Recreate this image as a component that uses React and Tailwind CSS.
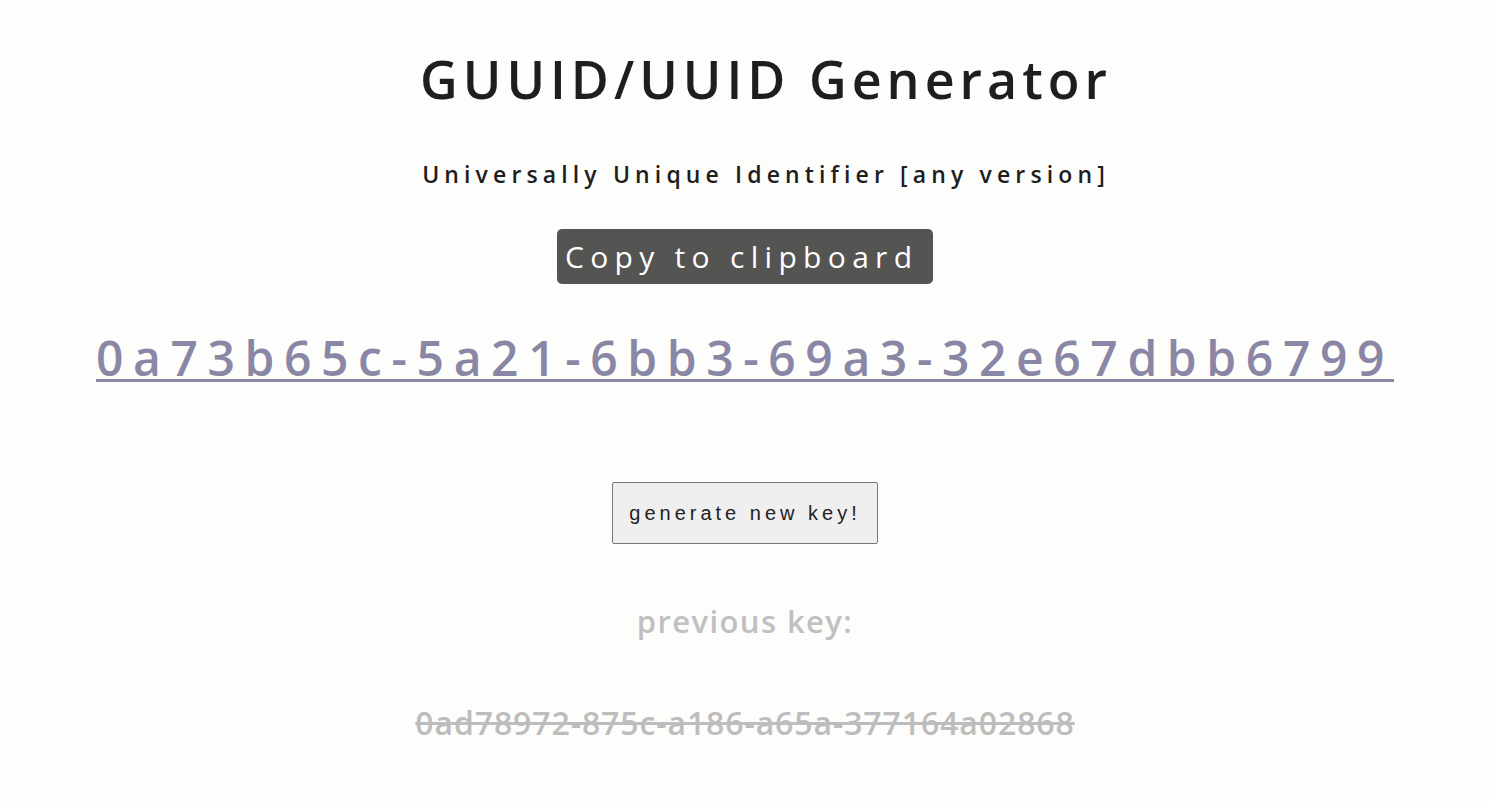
import React from "react";

const SANS = { fontFamily: '"Open Sans", "Noto Sans", sans-serif' };

export default function App() {
  return (
    <div className="min-h-[802px] w-[1490px] bg-[#fdfdfb] flex flex-col items-center" style={SANS}>
      <h1 className="mt-[48px] ml-[42px] h-[62px] whitespace-nowrap leading-[62px] text-[52px] font-semibold tracking-[0.096em] text-[#1e1e1e]">
        GUUID/UUID Generator
      </h1>
      <h2 className="mt-[50px] ml-[42px] h-[28px] whitespace-nowrap leading-[28px] text-[23px] font-semibold tracking-[0.223em] text-[#1e1e1e]">
        Universally Unique Identifier [any version]
      </h2>
      <button className="mt-[41px] h-[55px] w-[376px] rounded-[5px] bg-[#545453] px-[8px] text-left text-[30px] font-medium leading-[55px] tracking-[0.21em] text-white whitespace-nowrap">
        Copy to clipboard
      </button>
      <a
        href="#"
        className="mt-[46px] h-[56px] whitespace-nowrap leading-[56px] text-[48px] font-semibold tracking-[0.2em] text-[#8a87a6] underline decoration-[3px] underline-offset-[3px]"
      >
        0a73b65c-5a21-6bb3-69a3-32e67dbb6799
      </a>
      <button
        className="mt-[96px] h-[62px] w-[266px] rounded-[2px] border border-[#777777] bg-[#efefef] text-[20px] tracking-[0.2em] text-[#222222] whitespace-nowrap"
        style={{ fontFamily: '"Liberation Sans", Arial, sans-serif' }}
      >
        generate new key!
      </button>
      <p className="mt-[57px] h-[40px] whitespace-nowrap leading-[40px] text-[31px] font-semibold tracking-[0.045em] text-[#c0c0c0]">
        previous key:
      </p>
      <p className="mt-[62px] h-[40px] whitespace-nowrap leading-[40px] text-[32px] font-semibold tracking-[0.028em] text-[#bdbdbd] line-through decoration-[3px]">
        0ad78972-875c-a186-a65a-377164a02868
      </p>
    </div>
  );
}
